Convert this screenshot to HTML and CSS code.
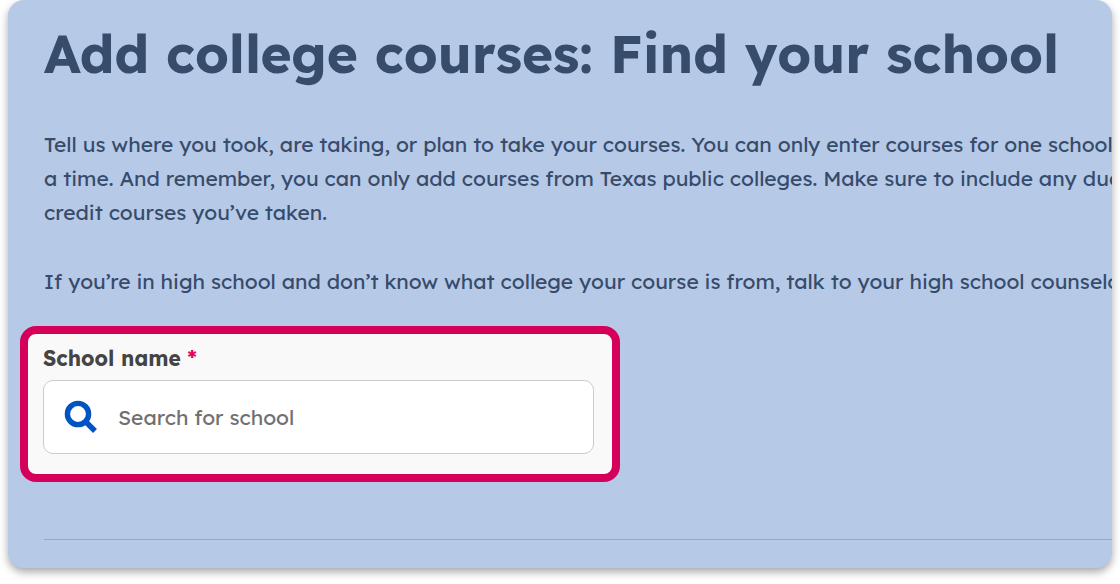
FILE: index.html
```html
<!DOCTYPE html>
<html lang="en">
<head>
  <meta charset="UTF-8">
  <meta name="viewport" content="width=device-width, initial-scale=1.0">
  <title>Add college courses: Find your school</title>
  <link rel="stylesheet" href="styles.css">
</head>
<body>

  <main class="card">
    <h1>Add college courses: Find your school</h1>

    <p>
      Tell us where you took, are taking, or plan to take your courses. You can only enter courses for one school at<br>
      a time. And remember, you can only add courses from Texas public colleges. Make sure to include any dual<br>
      credit courses you’ve taken.
    </p>
    <p>If you’re in high school and don’t know what college your course is from, talk to your high school counselor.</p>

    <!-- School search -->
    <form class="school-form">
      <label for="school">School name <span class="required">*</span></label>
      <div class="search-box">
        <svg class="search-icon" viewBox="0 0 34 34" aria-hidden="true">
          <circle cx="14" cy="14" r="10.6" />
          <path d="M21.5 21.5 L31 31" />
        </svg>
        <input type="text" id="school" placeholder="Search for school" required>
      </div>
    </form>

    <hr>
  </main>

</body>
</html>
```

FILE: styles.css
```css
* {
  box-sizing: border-box;
}

body {
  font-family: Lexend, Inter, sans-serif;
  margin: 0;
  background: #fff;
  color: #374b6b;
}

.card {
  margin: 0 8px 16px;
  padding: 23px 0 28px 36px;
  background: #b6c9e7;
  border-radius: 16px;
  box-shadow: 0 4px 8px rgba(0, 0, 0, 0.35);
  overflow: hidden;
}

h1 {
  margin: 0 0 44px;
  font-size: 53px;
  line-height: 60px;
  font-weight: 700;
  white-space: nowrap;
}

p {
  margin: 0 0 35px;
  font-size: 21px;
  line-height: 34px;
  white-space: nowrap;
}

.school-form {
  max-width: 600px;
  margin: 0 0 57px -24px;
  padding: 10px 18px 20px 15px;
  background: #f9f9f9;
  border: 8px solid #d4005a;
  border-radius: 16px;
}

p + .school-form {
  margin-top: -7px;
}

label {
  display: block;
  margin-bottom: 8px;
  color: #444;
  font-size: 21px;
  line-height: 28px;
  font-weight: 700;
}

.required {
  color: #e6005c;
}

.search-box {
  display: flex;
  align-items: center;
  gap: 20px;
  height: 74px;
  padding: 0 20px;
  background: #fff;
  border: 1px solid #ccc;
  border-radius: 10px;
}

.search-icon {
  flex: none;
  width: 34px;
  height: 34px;
  fill: none;
  stroke: #0054c2;
  stroke-width: 5.4;
}

input {
  flex: 1;
  min-width: 0;
  padding: 0;
  border: none;
  outline: none;
  background: transparent;
  color: #444;
  font-family: inherit;
  font-size: 21px;
  line-height: 28px;
}

input::placeholder {
  color: #707070;
}

hr {
  height: 1px;
  margin: 0;
  border: none;
  background: #94a8ca;
}
```
